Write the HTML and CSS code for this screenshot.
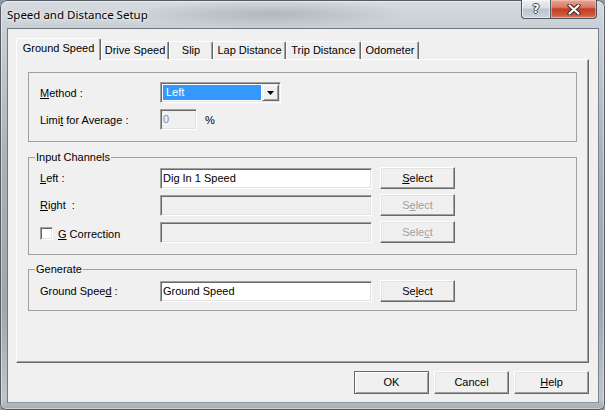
FILE: index.html
```html
<!DOCTYPE html>
<html>
<head>
<meta charset="utf-8">
<title>Speed and Distance Setup</title>
<link rel="stylesheet" href="styles.css">
</head>
<body>
<div class="window">
  <div class="titlebar">
    <span class="title">Speed and Distance Setup</span>
    <div class="caption">
      <div class="cap-btn cap-help"><span class="help-glyph">?</span></div>
      <div class="cap-btn cap-close">
        <svg width="14" height="11" viewBox="0 0 14 11">
          <path d="M2.5 1.5 L11.5 9.5 M11.5 1.5 L2.5 9.5" stroke="#3d2a26" stroke-width="4.2" stroke-linecap="round" fill="none"/>
          <path d="M2.5 1.5 L11.5 9.5 M11.5 1.5 L2.5 9.5" stroke="#ffffff" stroke-width="2.2" stroke-linecap="round" fill="none"/>
        </svg>
      </div>
    </div>
  </div>
  <div class="client">
    <div class="tabs">
      <div class="tab active tab-ground">Ground Speed</div>
      <div class="tab tab-drive">Drive Speed</div>
      <div class="tab tab-slip">Slip</div>
      <div class="tab tab-lap">Lap Distance</div>
      <div class="tab tab-trip">Trip Distance</div>
      <div class="tab tab-odo">Odometer</div>
    </div>
    <div class="panel">
      <fieldset class="group group-method">
        <div class="grid grid-method">
          <span class="label"><u>M</u>ethod :</span>
          <div class="combo">
            <div class="combo-sel"><span class="focus">Left</span></div>
            <div class="combo-btn">
              <svg width="7" height="4" viewBox="0 0 7 4"><path d="M0 0 H7 L3.5 4 Z" fill="#000"/></svg>
            </div>
          </div>
          <span class="label">Limi<u>t</u> for Average :</span>
          <div class="limit">
            <div class="edit disabled small">0</div>
            <span class="pct">%</span>
          </div>
        </div>
      </fieldset>

      <fieldset class="group group-input">
        <legend>Input Channels</legend>
        <div class="grid grid-rows">
          <span class="label"><u>L</u>eft :</span>
          <div class="edit">Dig In 1 Speed</div>
          <div class="btn"><u>S</u>elect</div>

          <span class="label"><u>R</u>ight&nbsp; :</span>
          <div class="edit disabled"></div>
          <div class="btn disabled">S<u>e</u>lect</div>

          <span class="label check-label"><span class="checkbox"></span><span><u>G</u> Correction</span></span>
          <div class="edit disabled"></div>
          <div class="btn disabled">Sele<u>c</u>t</div>
        </div>
      </fieldset>

      <fieldset class="group group-generate">
        <legend>Generate</legend>
        <div class="grid grid-rows">
          <span class="label">Ground Spee<u>d</u> :</span>
          <div class="edit">Ground Speed</div>
          <div class="btn">Se<u>l</u>ect</div>
        </div>
      </fieldset>
    </div>
    <div class="buttons">
      <div class="btn dlg default">OK</div>
      <div class="btn dlg">Cancel</div>
      <div class="btn dlg"><u>H</u>elp</div>
    </div>
  </div>
</div>
</body>
</html>
```
FILE: styles.css
```css
* {
  box-sizing: border-box;
}

body {
  margin: 0;
  background: #8d9aa6;
  font-family: "Liberation Sans", Arial, sans-serif;
  font-size: 11px;
  color: #000;
}

u {
  text-decoration: underline;
  text-underline-offset: 1px;
}

.window {
  width: 605px;
  height: 410px;
  display: flex;
  flex-direction: column;
  padding: 0 6px 7px 7px;
  border-radius: 7px 7px 6px 6px;
  background:
    radial-gradient(ellipse 140px 14px at 270px 14px, rgba(120,128,136,0.35), rgba(120,128,136,0) 100%),
    linear-gradient(180deg, #d6dbe0 0%, #c9cfd5 7%, #a9b0b8 40%, #9fa6ae 75%, #bfc5cb 97%, #a3a9b0 100%);
  box-shadow: inset 0 0 0 1px #555c64, inset 0 0 0 2px rgba(255,255,255,0.45);
}

.titlebar {
  height: 28px;
  display: flex;
  justify-content: space-between;
  align-items: flex-start;
}

.title {
  padding-top: 8px;
  line-height: 14px;
  font-family: "Noto Sans", "Liberation Sans", sans-serif;
  font-size: 11.5px;
  color: #000;
  text-shadow: 0 0 6px rgba(255,255,255,0.9), 0 0 3px rgba(255,255,255,0.8);
}

.caption {
  display: flex;
  margin-right: 2px;
}

.cap-btn {
  height: 19px;
  display: flex;
  align-items: center;
  justify-content: center;
  border: 1px solid #4e5560;
  border-top: none;
}

.cap-help {
  width: 29px;
  border-right: none;
  border-radius: 0 0 0 4px;
  background: linear-gradient(180deg, #eef1f4 0%, #d9dee3 45%, #bcc4cc 50%, #cdd4db 100%);
  box-shadow: inset 0 0 0 1px rgba(255,255,255,0.55);
}

.help-glyph {
  font-family: "DejaVu Sans", sans-serif;
  font-weight: bold;
  font-size: 12px;
  line-height: 12px;
  color: #fff;
  text-shadow: 1px 0 #3c434c, -1px 0 #3c434c, 0 1px #3c434c, 0 -1px #3c434c;
}

.cap-close {
  width: 47px;
  border-radius: 0 0 4px 0;
  background: linear-gradient(180deg, #e8a796 0%, #d97a66 40%, #c43c22 50%, #cf5a3e 85%, #e08a6c 100%);
  box-shadow: inset 0 0 0 1px rgba(255,210,200,0.5);
}

.client {
  flex: 1;
  display: flex;
  flex-direction: column;
  background: #f0f0f0;
  border: 1px solid;
  border-color: #6f7780 #7a828b #8b939b #6f7780;
  padding: 9px 9px 8px 8px;
}

/* Tabs */
.tabs {
  display: flex;
  align-items: flex-end;
  height: 21px;
}

.tab {
  height: 18px;
  line-height: 16px;
  text-align: center;
  white-space: nowrap;
  border-top: 1px solid #fff;
  border-left: 1px solid #fff;
  border-right: 1px solid #696969;
  box-shadow: inset -1px 0 #a0a0a0;
  border-radius: 2px 2px 0 0;
  background: #f0f0f0;
}

.tab.active {
  height: 22px;
  line-height: 18px;
  margin-bottom: -1px;
  position: relative;
  z-index: 1;
  padding-bottom: 3px;
}

.tab-ground { width: 85px; }
.tab-drive { width: 68px; }
.tab-slip { width: 44px; }
.tab-lap { width: 73px; }
.tab-trip { width: 75px; }
.tab-odo { width: 58px; }

.panel {
  height: 304px;
  display: flex;
  flex-direction: column;
  border: 1px solid;
  border-color: #fff #696969 #696969 #fff;
  box-shadow: inset -1px -1px #a0a0a0;
  padding: 12px 11px 0 11px;
}

/* Group boxes */
.group {
  margin: 0;
  min-width: 0;
  border: 1px solid #a0a0a0;
  padding: 0 0 0 6px;
}

.group legend {
  padding: 0 1px;
  line-height: 13px;
  font-size: 11px;
}

.group-method {
  padding-top: 9px;
  padding-bottom: 11px;
}

.group-input {
  margin-top: 9px;
  padding-top: 3px;
  padding-bottom: 11px;
}

.group-generate {
  margin-top: 8px;
  padding-top: 4px;
  padding-bottom: 8px;
}

.grid {
  display: grid;
  align-items: center;
  padding-left: 5px;
}

.grid-method {
  grid-template-columns: 120px auto;
  grid-auto-rows: 21px;
  row-gap: 6px;
}

.grid-rows {
  grid-template-columns: 120px 212px 75px;
  grid-auto-rows: 22px;
  row-gap: 5px;
}

.grid-rows .btn {
  margin-left: 8px;
}

.label {
  white-space: nowrap;
}

.check-label {
  display: flex;
  align-items: center;
  gap: 5px;
  padding-top: 3px;
}

.checkbox {
  width: 13px;
  height: 13px;
  background: #fff;
  border: 1px solid;
  border-color: #a0a0a0 #fff #fff #a0a0a0;
  box-shadow: inset 1px 1px #696969, inset -1px -1px #e3e3e3;
}

/* Edits */
.edit {
  height: 21px;
  border: 1px solid;
  border-color: #a0a0a0 #fff #fff #a0a0a0;
  box-shadow: inset 1px 1px #696969, inset -1px -1px #e3e3e3;
  background: #fff;
  padding: 0 2px;
  line-height: 19px;
  white-space: nowrap;
}

.edit.disabled {
  background: #f0f0f0;
  color: #8a8a8a;
}

.edit.small {
  width: 37px;
}

.limit {
  display: flex;
  align-items: center;
  gap: 8px;
}

.pct {
  padding-top: 1px;
}

/* Combo */
.combo {
  width: 121px;
  height: 21px;
  display: flex;
  align-items: center;
  gap: 1px;
  padding: 1px;
  border: 1px solid;
  border-color: #a0a0a0 #fff #fff #a0a0a0;
  box-shadow: inset 1px 1px #696969, inset -1px -1px #e3e3e3;
  background: #fff;
}

.combo-sel {
  flex: 1;
  height: 15px;
  margin-left: 1px;
  background: #3399ff;
  display: flex;
}

.focus {
  flex: 1;
  color: #fff;
  line-height: 13px;
  padding-left: 2px;
  border: 1px dotted #c07a1c;
}

.combo-btn {
  width: 17px;
  height: 17px;
  display: flex;
  align-items: center;
  justify-content: center;
  background: #f0f0f0;
  border: 1px solid;
  border-color: #f0f0f0 #696969 #696969 #f0f0f0;
  box-shadow: inset 1px 1px #fff, inset -1px -1px #a0a0a0;
}

/* Buttons */
.btn {
  height: 22px;
  line-height: 20px;
  text-align: center;
  background: #f0f0f0;
  border: 1px solid;
  border-color: #fff #696969 #696969 #fff;
  box-shadow: inset -1px -1px #a0a0a0, inset 1px 1px #e3e3e3;
  white-space: nowrap;
}

.btn.disabled {
  color: #a0a0a0;
}

.grid-rows .btn {
  width: 75px;
}

.buttons {
  margin-top: auto;
  display: flex;
  justify-content: flex-end;
  gap: 5px;
}

.btn.dlg {
  width: 75px;
  height: 23px;
  line-height: 21px;
}

.btn.default {
  border-color: #696969;
  box-shadow: inset 1px 1px #fff, inset -1px -1px #a0a0a0;
}
```
